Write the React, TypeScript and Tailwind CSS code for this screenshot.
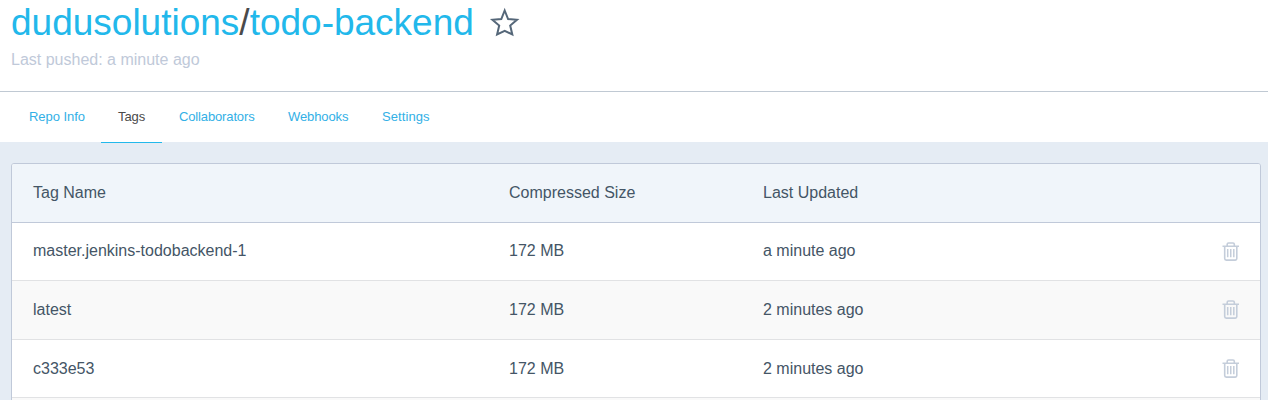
const tabs = [
  { label: "Repo Info", style: "w-[89px] tracking-[-0.04px] border-transparent text-[#32b0e6]" },
  { label: "Tags", style: "w-[61px] tracking-[-0.1px] border-[#22b8eb] text-[#4a4a4a]" },
  { label: "Collaborators", style: "w-[109px] tracking-[-0.14px] border-transparent text-[#32b0e6]" },
  { label: "Webhooks", style: "w-[94px] tracking-[-0.1px] border-transparent text-[#32b0e6]" },
  { label: "Settings", style: "w-[82px] tracking-[0.08px] border-transparent text-[#32b0e6]" },
];

const rows = [
  { name: "master.jenkins-todobackend-1", size: "172 MB", updated: "a minute ago", style: "h-[58px] bg-white leading-[22px]", text: "pb-[2px]", icon: "" },
  { name: "latest", size: "172 MB", updated: "2 minutes ago", style: "h-[59px] bg-[#f9f9f9]", text: "", icon: "mb-[2px]" },
  { name: "c333e53", size: "172 MB", updated: "2 minutes ago", style: "h-[58px] bg-white", text: "", icon: "" },
];

function StarIcon() {
  return (
    <svg width="32" height="32" viewBox="0 0 32 32" className="ml-[15px] mt-[7px] shrink-0" fill="none" stroke="#556779" strokeWidth="2" strokeLinejoin="miter">
      <path d="M15.7 3.5 L19.1 12 L28 12.8 L21.2 18.6 L23.3 27.5 L15.7 23.9 L8.1 27.5 L10.2 18.6 L3.4 12.8 L12.3 12 Z" />
    </svg>
  );
}

function TrashIcon({ className }: { className: string }) {
  return (
    <svg viewBox="0 0 21 21" className={`h-[21px] w-[21px] ${className}`} fill="none" stroke="#c4cdda" strokeWidth="1.6" strokeLinejoin="round">
      <path d="M2.5 5.2H19M7.2 5V3.3Q7.2 2 8.5 2H13Q14.3 2 14.3 3.3V5" />
      <path d="M4.7 5.2V17.6Q4.7 19.1 6.2 19.1H15.3Q16.8 19.1 16.8 17.6V5.2" />
      <path d="M7.7 8V16.2M10.75 8V16.2M13.8 8V16.2" strokeWidth="1.5" />
    </svg>
  );
}

export default function App() {
  return (
    <div className="flex h-[400px] w-full flex-col overflow-hidden bg-[#e5ecf4] font-['Liberation_Sans',Arial,sans-serif] text-base text-[#445566]">
      <header className="h-[92px] shrink-0 border-b border-[#c0c9d3] bg-white pl-[11px]">
        <div className="flex h-[46px] items-start">
          <h1 className="whitespace-nowrap pt-px text-[37px] leading-[44px] text-[#22b8eb]">
            <a>dudusolutions</a>
            <span className="text-[#4a4a4a]">/</span>
            <a>todo-backend</a>
          </h1>
          <StarIcon />
        </div>
        <p className="pt-[2px] leading-6 text-[#c0c9d9]">Last pushed: a minute ago</p>
      </header>

      <nav className="flex h-[51px] shrink-0 bg-[linear-gradient(#fff_50px,#e5ecf4_50px)] pl-[12px] text-[13px] leading-[49px]">
        {tabs.map((tab) => (
          <a key={tab.label} className={`whitespace-nowrap border-b pl-[17px] ${tab.style}`}>
            {tab.label}
          </a>
        ))}
      </nav>

      <main className="pl-[11px] pr-[7px] pt-5">
        <div className="h-[260px] overflow-hidden rounded-[3px] border border-[#c0c9d9] bg-[#f9f9f9]">
          <div className="grid h-[59px] grid-cols-[476px_254px_1fr] items-center border-b border-[#c0c9d9] bg-[#f0f5fa] pl-[21px]">
            <span>Tag Name</span>
            <span>Compressed Size</span>
            <span>Last Updated</span>
          </div>
          {rows.map((row) => (
            <div
              key={row.name}
              className={`grid grid-cols-[476px_254px_1fr_auto] items-center border-b border-[#e1e2e4] pl-[21px] pr-[19px] ${row.style}`}
            >
              <span className={row.text}>{row.name}</span>
              <span className={row.text}>{row.size}</span>
              <span className={row.text}>{row.updated}</span>
              <TrashIcon className={row.icon} />
            </div>
          ))}
        </div>
      </main>
    </div>
  );
}
